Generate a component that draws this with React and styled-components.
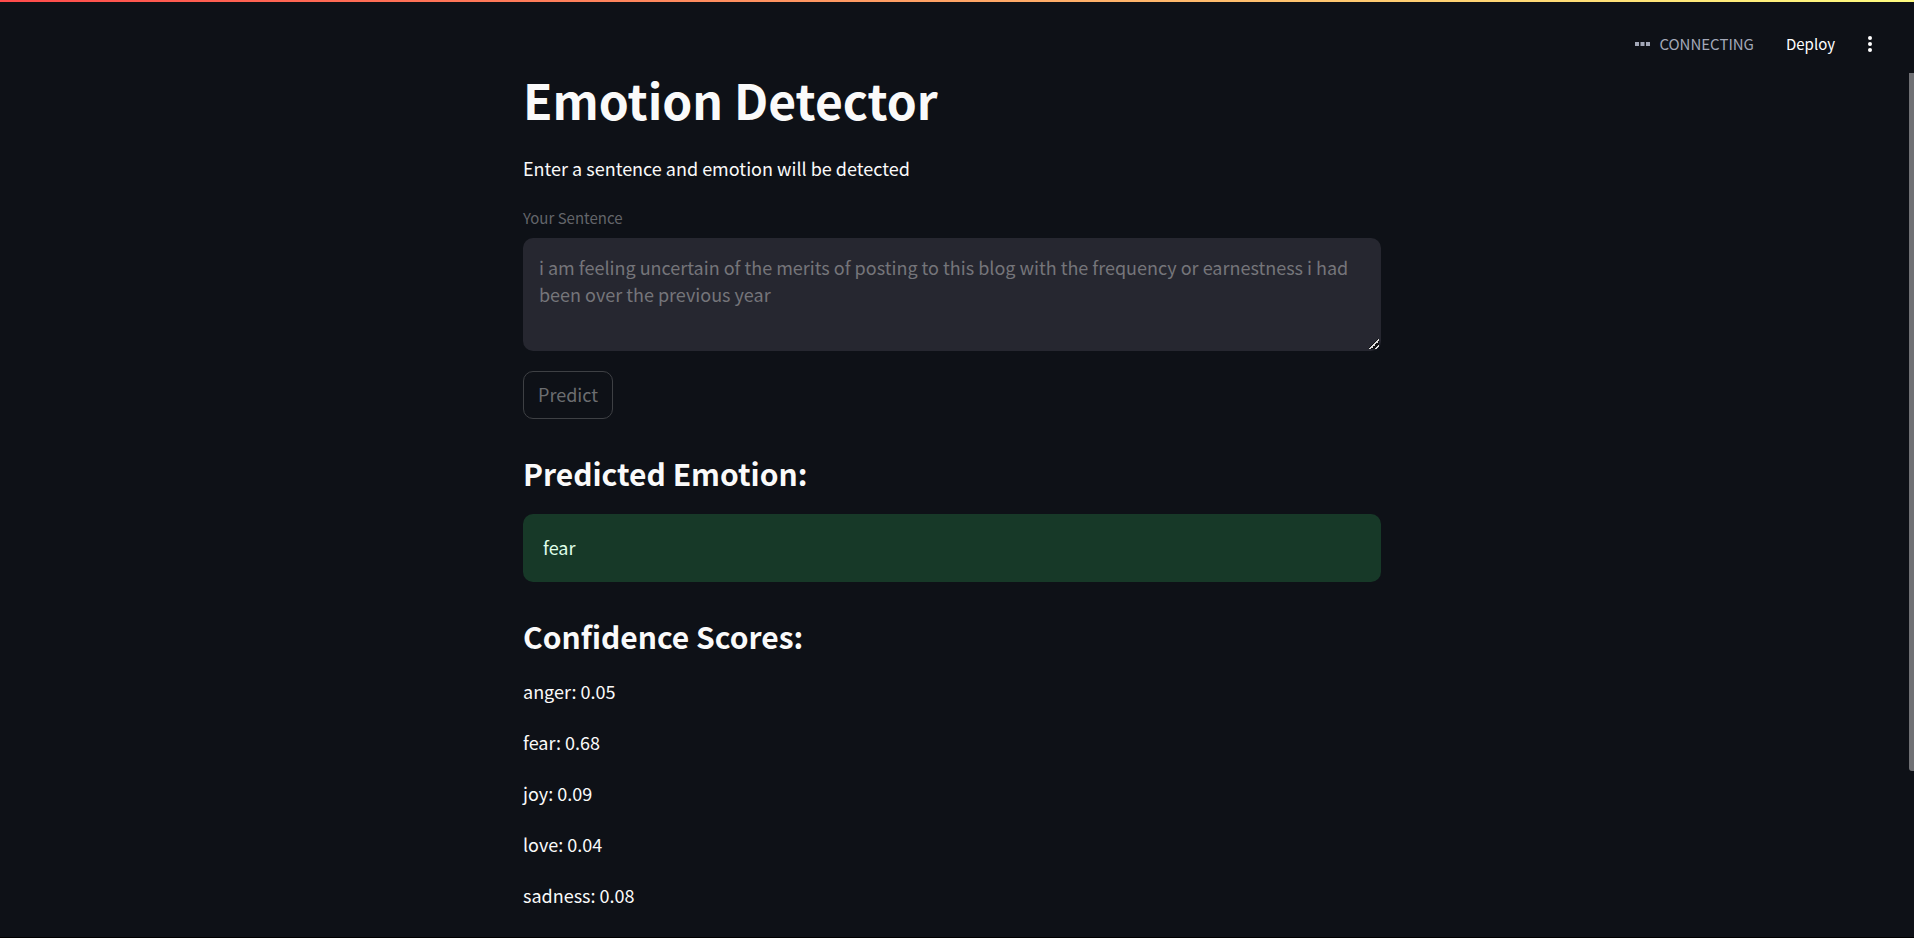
import React from "react";
import styled, { createGlobalStyle } from "styled-components";

const GlobalStyle = createGlobalStyle`
  *, *::before, *::after { box-sizing: border-box; }
  body {
    margin: 0;
    background: #0e1117;
    color: #fafafa;
    font-family: "Source Sans Pro", "Noto Sans CJK SC", sans-serif;
    font-size: 18px;
    line-height: 28px;
  }
`;

const Page = styled.div`
  position: relative;
  height: 100vh;
  display: flex;
  flex-direction: column;
  overflow: hidden;
  border-bottom: 1px solid #000;
`;

const Decoration = styled.div`
  flex: none;
  height: 2px;
  background: linear-gradient(90deg, #ff4b4b, #fffd80);
`;

const Header = styled.header`
  flex: none;
  display: flex;
  align-items: center;
  justify-content: flex-end;
  height: 68px;
  padding: 16px 32px 0 0;
`;

const Status = styled.div`
  display: flex;
  align-items: center;
  gap: 9px;
  margin-right: 24px;
  color: #a3a8b8;
  font-size: 15px;
  line-height: 24px;
`;

const HeaderButton = styled.button`
  display: flex;
  align-items: center;
  justify-content: center;
  height: 32px;
  padding: 0 8px;
  border: 0;
  background: none;
  color: #fff;
  font: inherit;
  font-size: 15px;
  cursor: pointer;
`;

const MenuButton = styled(HeaderButton)`
  width: 24px;
  margin-left: 15px;
  padding: 0;
`;

const Main = styled.main`
  flex: 1;
  min-height: 0;
  padding-right: 10px;
`;

const Block = styled.div`
  display: flex;
  flex-direction: column;
  width: 100%;
  max-width: 858px;
  margin: 0 auto;
`;

const Title = styled.h1`
  margin: 0;
  font-size: 48px;
  font-weight: 700;
  line-height: 58px;
`;

const Intro = styled.p`
  margin: 26px 0 24px;
`;

const Label = styled.label`
  margin-bottom: 8px;
  color: #63656a;
  font-size: 15px;
  line-height: 24px;
`;

const SentenceBox = styled.textarea`
  display: block;
  width: 100%;
  height: 113px;
  padding: 16px;
  border: 0;
  border-radius: 10px;
  background: #262730;
  color: #75757a;
  font: inherit;
  line-height: 27px;
  resize: vertical;
  outline: none;

  &::-webkit-resizer {
    background: linear-gradient(
        135deg,
        transparent 42%,
        #111 42%,
        #111 48%,
        #dcdcdc 48%,
        #dcdcdc 60%,
        #111 60%,
        #111 76%,
        #dcdcdc 76%,
        #dcdcdc 88%,
        transparent 88%
      )
      3px 3px / 10px 10px no-repeat;
  }
`;

const PredictButton = styled.button`
  align-self: flex-start;
  height: 48px;
  margin-top: 20px;
  padding: 0 14px 2px;
  border: 1px solid #3e4044;
  border-radius: 10px;
  background: transparent;
  color: #6b6d70;
  font: inherit;
`;

const Heading = styled.h2`
  margin: 35px 0 21px;
  font-size: 30px;
  font-weight: 600;
  line-height: 39px;
`;

const Alert = styled.div`
  padding: 19px 20px 21px;
  border-radius: 10px;
  background: #173928;
  color: #dffde9;
`;

const Scores = styled.div`
  display: flex;
  flex-direction: column;
  gap: 23px;
`;

const Score = styled.p`
  margin: 0;
`;

const ScrollThumb = styled.div`
  position: absolute;
  top: 73px;
  right: 0;
  width: 5px;
  height: 74.5%;
  border-bottom-left-radius: 3px;
  background: #6f7074;
`;

const scores = [
  ["anger", "0.05"],
  ["fear", "0.68"],
  ["joy", "0.09"],
  ["love", "0.04"],
  ["sadness", "0.08"],
];

const ConnectingIcon = () => (
  <svg width="15" height="4" viewBox="0 0 15 4" fill="currentColor" aria-hidden="true">
    <rect width="4" height="4" />
    <rect x="5.5" width="4" height="4" />
    <rect x="11" width="4" height="4" />
  </svg>
);

const MoreIcon = () => (
  <svg width="4" height="16" viewBox="0 0 4 16" fill="currentColor" aria-hidden="true">
    <circle cx="2" cy="2" r="2" />
    <circle cx="2" cy="8" r="2" />
    <circle cx="2" cy="14" r="2" />
  </svg>
);

export default function App() {
  return (
    <>
      <GlobalStyle />
      <Page>
        <Decoration />
        <Header>
          <Status role="status">
            <ConnectingIcon />
            <span>CONNECTING</span>
          </Status>
          <HeaderButton type="button">Deploy</HeaderButton>
          <MenuButton type="button" aria-label="Main menu">
            <MoreIcon />
          </MenuButton>
        </Header>
        <Main>
          <Block>
            <Title>Emotion Detector</Title>
            <Intro>Enter a sentence and emotion will be detected</Intro>
            <Label htmlFor="sentence">Your Sentence</Label>
            <SentenceBox
              id="sentence"
              disabled
              defaultValue="i am feeling uncertain of the merits of posting to this blog with the frequency or earnestness i had been over the previous year"
            />
            <PredictButton type="button" disabled>
              Predict
            </PredictButton>
            <Heading>Predicted Emotion:</Heading>
            <Alert role="alert">fear</Alert>
            <Heading>Confidence Scores:</Heading>
            <Scores>
              {scores.map(([name, value]) => (
                <Score key={name}>
                  {name}: {value}
                </Score>
              ))}
            </Scores>
          </Block>
        </Main>
        <ScrollThumb />
      </Page>
    </>
  );
}
